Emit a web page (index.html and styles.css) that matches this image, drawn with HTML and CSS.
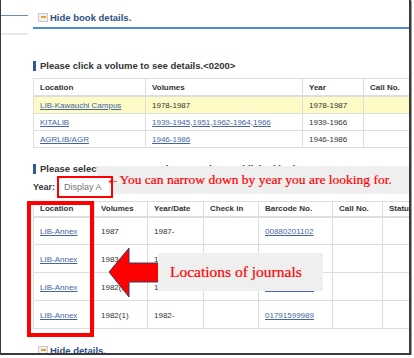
FILE: index.html
```html
<!DOCTYPE html>
<html lang="en">
<head>
  <meta charset="UTF-8">
  <title>Book details</title>
  <link rel="stylesheet" href="styles.css">
</head>
<body>
  <div class="frame">
    <!-- left edge of the neighbouring panel -->
    <div class="side">
      <span class="side-line1"></span>
      <span class="side-line2"></span>
    </div>

    <div class="main">
      <div class="toggle toggle-book">
        <span class="minus"></span>
        <a href="#">Hide book details.</a>
      </div>

      <h2 class="sec-title first">Please click a volume to see details.&lt;0200&gt;</h2>
      <table class="vol-table">
        <colgroup>
          <col style="width:112px"><col style="width:157px"><col style="width:61px"><col style="width:70px">
        </colgroup>
        <tr><th>Location</th><th>Volumes</th><th>Year</th><th>Call No.</th></tr>
        <tr class="is-current"><td><a href="#">LIB-Kawauchi Campus</a></td><td>1978-1987</td><td>1978-1987</td><td></td></tr>
        <tr><td><a href="#">KITALIB</a></td><td><a href="#">1939-1945,1951,1962-1964,1966</a></td><td>1939-1966</td><td></td></tr>
        <tr><td><a href="#">AGRLIB/AGR</a></td><td><a href="#">1946-1986</a></td><td>1946-1986</td><td></td></tr>
      </table>

      <h2 class="sec-title second">Please select a year to see the magazines published in the year &lt;0201&gt;.</h2>
      <div class="year-row">
        <label>Year:</label>
        <div class="year-select">Display A</div>
      </div>

      <div class="holdings">
        <table class="hold-table">
          <colgroup>
            <col style="width:61px"><col style="width:53px"><col style="width:56px"><col style="width:55px"><col style="width:74px"><col style="width:50px"><col style="width:60px">
          </colgroup>
          <tr class="head"><th>Location</th><th>Volumes</th><th>Year/Date</th><th>Check in</th><th>Barcode No.</th><th>Call No.</th><th>Status</th></tr>
          <tr><td><a href="#">LIB-Annex</a></td><td>1987</td><td>1987-</td><td></td><td><a href="#">00880201102</a></td><td></td><td></td></tr>
          <tr><td><a href="#">LIB-Annex</a></td><td>1983</td><td>1983-</td><td></td><td><a href="#">00830201245</a></td><td></td><td></td></tr>
          <tr><td><a href="#">LIB-Annex</a></td><td>1982(2)</td><td>1982-</td><td></td><td><a href="#">01791599990</a></td><td></td><td></td></tr>
          <tr><td><a href="#">LIB-Annex</a></td><td>1982(1)</td><td>1982-</td><td></td><td><a href="#">01791599989</a></td><td></td><td></td></tr>
        </table>
        <div class="mark-box"></div>
      </div>

      <div class="toggle toggle-foot">
        <span class="minus"></span>
        <a href="#">Hide details.</a>
      </div>
    </div>

    <!-- annotations drawn over the page -->
    <div class="note-year-bg"></div>
    <div class="note-year-text">&larr;You can narrow down by year you are looking for.</div>
    <svg class="big-arrow" width="60" height="54" viewBox="0 0 60 54">
      <polygon points="2,26 22,2 22,17 60,17 60,36 22,36 22,51" fill="#ff0000" stroke="#34405e" stroke-width="1"/>
    </svg>
    <div class="note-loc">Locations of journals</div>
  </div>
</body>
</html>
```

FILE: styles.css
```css
body {
  margin: 0;
  background: #fff;
  font-family: "Liberation Sans", Arial, sans-serif;
  color: #333;
}
.frame {
  position: relative;
  display: flex;
  width: 408px;
  height: 353px;
  border-left: 1px solid #3a3a3a;
  border-right: 2px solid #3a3a3a;
  border-bottom: 2px solid #3a3a3a;
  box-shadow: 1px 1px 0 #9a9a9a;
  overflow: hidden;
}
.side {
  width: 27px;
  flex: none;
}
.side-line1 {
  display: block;
  margin-top: 15px;
  border-top: 1px solid #7088ad;
}
.side-line2 {
  display: block;
  margin-top: 17px;
  border-top: 2px solid #e8e8e8;
}
.main {
  flex: 1;
  min-width: 0;
  padding-left: 5px;
}
.toggle {
  display: flex;
  align-items: center;
  gap: 2px;
  padding-left: 5px;
  font-size: 9.5px;
  font-weight: bold;
}
.toggle a {
  color: #2e4f85;
  text-decoration: none;
}
.toggle-book {
  box-sizing: border-box;
  height: 29px;
  padding-top: 7px;
  border-bottom: 2px solid #4a8bd4;
}
.toggle-foot {
  margin-top: 16px;
  height: 10px;
}
.minus {
  display: flex;
  align-items: center;
  justify-content: center;
  width: 8px;
  height: 7px;
  border: 1px solid #c8c8c8;
  background: #f2f2f2;
}
.minus::after {
  content: "";
  width: 5px;
  height: 2px;
  background: #f29a2e;
}
.sec-title {
  margin: 0;
  font-size: 9.5px;
  line-height: 10px;
  font-weight: bold;
  border-left: 3px solid #2f5a96;
  padding-left: 4px;
  white-space: nowrap;
  color: #333;
}
.sec-title.first {
  margin-top: 32px;
}
.sec-title.second {
  margin-top: 16px;
}
table {
  border-collapse: collapse;
  table-layout: fixed;
  font-size: 8px;
}
th, td {
  border: 1px solid #ddd;
  padding: 0 6px;
  text-align: left;
  white-space: nowrap;
  overflow: hidden;
}
th {
  font-weight: bold;
  color: #333;
  border-bottom: 2px solid #ddd;
}
td a {
  color: #4565a5;
}
.vol-table {
  width: 400px;
  margin-top: 7px;
}
.vol-table th, .vol-table td {
  height: 16px;
}
.vol-table .is-current td {
  background: #fdfac5;
}
.year-row {
  display: flex;
  align-items: center;
  margin-top: 2px;
  font-size: 9px;
}
.year-row label {
  width: 24px;
  font-weight: bold;
  color: #333;
}
.year-select {
  position: relative;
  z-index: 2;
  box-sizing: border-box;
  display: flex;
  align-items: center;
  width: 56px;
  height: 22px;
  padding-left: 5px;
  border: 2px solid #f00;
  background: #fff;
  color: #777;
  white-space: nowrap;
  overflow: hidden;
}
.holdings {
  position: relative;
  margin-top: 3px;
}
.hold-table {
  width: 409px;
}
.hold-table tr {
  height: 28px;
}
.hold-table tr.head {
  height: 15px;
}
.hold-table td {
  padding-top: 2px;
}
.mark-box {
  position: absolute;
  left: -6px;
  top: 0;
  box-sizing: border-box;
  width: 67px;
  height: 136px;
  border: 4px solid #f00;
}
.note-year-bg {
  position: absolute;
  left: 96px;
  top: 166px;
  width: 330px;
  height: 28px;
  background: #efefef;
  z-index: 1;
}
.note-year-text {
  position: absolute;
  left: 105px;
  top: 172px;
  z-index: 3;
  font-family: "Liberation Serif", "Times New Roman", serif;
  font-size: 13.5px;
  line-height: 16px;
  color: #f00;
  white-space: nowrap;
  -webkit-text-stroke: 0.2px #f00;
}
.big-arrow {
  position: absolute;
  left: 106px;
  top: 246px;
}
.note-loc {
  position: absolute;
  left: 157px;
  top: 253px;
  box-sizing: border-box;
  display: flex;
  align-items: center;
  width: 165px;
  height: 38px;
  padding-left: 12px;
  background: #efefef;
  font-family: "Liberation Serif", "Times New Roman", serif;
  font-size: 15.5px;
  color: #f00;
  white-space: nowrap;
  -webkit-text-stroke: 0.2px #f00;
}
```
